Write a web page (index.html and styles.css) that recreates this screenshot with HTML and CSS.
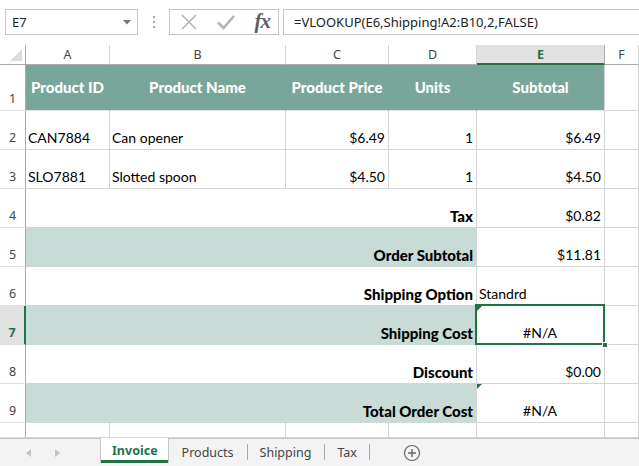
FILE: index.html
```html
<!DOCTYPE html>
<html lang="en">
<head>
  <meta charset="UTF-8" />
  <title>Invoice - Excel</title>
  <link rel="stylesheet" href="styles.css">
</head>
<body>

<div class="app">
  <div class="formula-bar">
    <div class="name-box">
      <span>E7</span>
      <svg class="caret" width="8" height="5" viewBox="0 0 8 5"><path d="M0 0 H8 L4 4.5 Z" fill="#777"/></svg>
    </div>
    <div class="grip"><i></i><i></i><i></i></div>
    <div class="fx-buttons">
      <svg width="18" height="18" viewBox="0 0 18 18"><path d="M2 2 L16 16 M16 2 L2 16" stroke="#b4b4b4" stroke-width="1.6" fill="none"/></svg>
      <svg width="20" height="18" viewBox="0 0 20 18"><path d="M2 9.5 L7.5 15 L18 3" stroke="#b4b4b4" stroke-width="2.6" fill="none"/></svg>
      <span class="fx">fx</span>
    </div>
    <div class="formula">=VLOOKUP(E6,Shipping!A2:B10,2,FALSE)</div>
  </div>

  <div class="sheet">
    <div class="corner"><span></span></div>
    <div class="col-head">A</div>
    <div class="col-head">B</div>
    <div class="col-head">C</div>
    <div class="col-head">D</div>
    <div class="col-head active">E</div>
    <div class="col-head">F</div>

    <div class="row-head">1</div>
    <div class="cell head">Product ID</div>
    <div class="cell head">Product Name</div>
    <div class="cell head">Product Price</div>
    <div class="cell head">Units</div>
    <div class="cell head">Subtotal</div>
    <div class="cell"></div>

    <div class="row-head">2</div>
    <div class="cell">CAN7884</div>
    <div class="cell">Can opener</div>
    <div class="cell num">$6.49</div>
    <div class="cell num">1</div>
    <div class="cell num">$6.49</div>
    <div class="cell"></div>

    <div class="row-head">3</div>
    <div class="cell">SLO7881</div>
    <div class="cell">Slotted spoon</div>
    <div class="cell num">$4.50</div>
    <div class="cell num">1</div>
    <div class="cell num">$4.50</div>
    <div class="cell"></div>

    <div class="row-head">4</div>
    <div class="cell label">Tax</div>
    <div class="cell num">$0.82</div>
    <div class="cell"></div>

    <div class="row-head">5</div>
    <div class="cell label band">Order Subtotal</div>
    <div class="cell num">$11.81</div>
    <div class="cell"></div>

    <div class="row-head">6</div>
    <div class="cell label">Shipping Option</div>
    <div class="cell">Standrd</div>
    <div class="cell"></div>

    <div class="row-head active">7</div>
    <div class="cell label band">Shipping Cost</div>
    <div class="cell center selected"><span class="err"></span>#N/A<span class="handle"></span></div>
    <div class="cell"></div>

    <div class="row-head">8</div>
    <div class="cell label">Discount</div>
    <div class="cell num">$0.00</div>
    <div class="cell"></div>

    <div class="row-head">9</div>
    <div class="cell label band">Total Order Cost</div>
    <div class="cell center"><span class="err"></span>#N/A</div>
    <div class="cell"></div>

    <div class="row-head"></div>
    <div class="cell"></div>
    <div class="cell"></div>
    <div class="cell"></div>
    <div class="cell"></div>
    <div class="cell"></div>
    <div class="cell"></div>
  </div>

  <div class="tabs">
    <div class="nav">
      <svg width="6" height="8" viewBox="0 0 6 8"><path d="M5 0 V8 L0 4 Z" fill="#c4c4c4"/></svg>
      <svg width="6" height="8" viewBox="0 0 6 8"><path d="M1 0 V8 L6 4 Z" fill="#c4c4c4"/></svg>
    </div>
    <div class="tab current">Invoice</div>
    <div class="tab">Products</div>
    <div class="tab">Shipping</div>
    <div class="tab">Tax</div>
    <svg class="add" width="18" height="18" viewBox="0 0 18 18">
      <circle cx="9" cy="9" r="7.5" stroke="#666" stroke-width="1.2" fill="none"/>
      <path d="M9 5 V13 M5 9 H13" stroke="#666" stroke-width="1.4"/>
    </svg>
  </div>
</div>

</body>
</html>
```

FILE: styles.css
```css
* {
  box-sizing: border-box;
}
body {
  margin: 0;
  background: #fff;
  font-family: "Noto Sans", "Open Sans", sans-serif;
}

.app {
  width: 639px;
  height: 466px;
  overflow: hidden;
}

/* formula bar */
.formula-bar {
  height: 45px;
  display: flex;
  align-items: flex-start;
  padding: 9px 0 0 5px;
}

.name-box {
  width: 133px;
  height: 26px;
  border: 1px solid #c6c6c6;
  display: flex;
  align-items: center;
  justify-content: space-between;
  padding: 0 6px 0 6px;
  font-size: 13px;
  color: #222;
}

.grip {
  width: 31px;
  height: 26px;
  display: flex;
  flex-direction: column;
  align-items: center;
  justify-content: center;
  gap: 3px;
}
.grip i {
  width: 2px;
  height: 2px;
  background: #a6a6a6;
}

.fx-buttons {
  width: 110px;
  height: 26px;
  border: 1px solid #c6c6c6;
  display: flex;
  align-items: center;
  justify-content: space-between;
  padding: 0 8px 0 10px;
}
.fx {
  font-family: "Liberation Serif", "DejaVu Serif", serif;
  font-style: italic;
  font-weight: bold;
  font-size: 21px;
  color: #606060;
  letter-spacing: -1px;
  line-height: 1;
  margin-top: -2px;
}

.formula {
  flex: 1;
  height: 26px;
  margin-left: 4px;
  border: 1px solid #c6c6c6;
  border-right: 0;
  padding-left: 10px;
  font-size: 13px;
  line-height: 24px;
  color: #222;
  white-space: nowrap;
}

/* grid */
.sheet {
  display: grid;
  grid-template-columns: 26px 84px 176px 103px 88px 128px 1fr;
  grid-template-rows: 20px 46px repeat(8, 39px) 15px;
  height: 393px;
  overflow: hidden;
  font-family: Lato, "Carlito", sans-serif;
  font-size: 14px;
  color: #000;
}

.corner {
  border-right: 1px solid #ababab;
  border-bottom: 1px solid #ababab;
  position: relative;
}
.corner span {
  position: absolute;
  right: 3px;
  bottom: 3px;
  width: 0;
  height: 0;
  border-left: 12px solid transparent;
  border-bottom: 12px solid #dcdcdc;
}

.col-head {
  border-right: 1px solid #d4d4d4;
  border-bottom: 1px solid #ababab;
  font-family: "Noto Sans", sans-serif;
  font-size: 12.5px;
  color: #444;
  text-align: center;
  line-height: 19px;
}
.col-head.active {
  background: #e1e1e1;
  color: #217346;
  font-weight: bold;
  border-bottom: 2px solid #217346;
  border-right-color: #ababab;
}

.row-head {
  border-right: 1px solid #ababab;
  border-bottom: 1px solid #dedede;
  font-family: "Noto Sans", sans-serif;
  font-size: 12.5px;
  color: #444;
  display: flex;
  align-items: flex-end;
  justify-content: center;
  padding-bottom: 3px;
}
.row-head.active {
  background: #e1e1e1;
  color: #217346;
  font-weight: bold;
  border-right: 2px solid #217346;
}

.cell {
  border-right: 1px solid #d4d4d4;
  border-bottom: 1px solid #d4d4d4;
  display: flex;
  align-items: flex-end;
  padding: 0 3px 3px 2px;
  white-space: nowrap;
  position: relative;
}
.cell.head {
  background: #79a69a;
  border-right-color: #79a69a;
  border-bottom-color: #dfe8e5;
  color: #fff;
  font-weight: 900;
  font-size: 15px;
  align-items: center;
  justify-content: center;
  padding: 0 0 1px;
}
.cell.head:nth-child(13) {
  border-right-color: #d4d4d4;
}
.cell.num {
  justify-content: flex-end;
}
.cell.center {
  justify-content: center;
}
.cell.label {
  grid-column: span 4;
  justify-content: flex-end;
  font-weight: 900;
  font-size: 15px;
  padding-right: 3px;
  padding-bottom: 2px;
}
.cell.band {
  background: #c9dbd6;
  border-right-color: #d4d4d4;
  border-bottom-color: #c9dbd6;
}

.err {
  position: absolute;
  top: 0;
  left: 0;
  width: 0;
  height: 0;
  border-top: 5px solid #217346;
  border-right: 5px solid transparent;
}

.selected::after {
  content: "";
  position: absolute;
  top: -2px;
  left: -2px;
  right: -1px;
  bottom: -1px;
  border: 2px solid #217346;
}
.handle {
  position: absolute;
  right: -4px;
  bottom: -4px;
  width: 6px;
  height: 6px;
  background: #217346;
  border: 1px solid #fff;
  z-index: 2;
}

/* sheet tabs */
.tabs {
  height: 28px;
  background: #f3f3f3;
  border-top: 1px solid #c6c6c6;
  display: flex;
  align-items: stretch;
  font-size: 12.5px;
  color: #444;
}

.nav {
  width: 100px;
  display: flex;
  align-items: center;
  gap: 22px;
  padding-left: 26px;
}

.tab {
  display: flex;
  align-items: center;
  padding: 0 13px;
  position: relative;
}
.tab + .tab::before {
  content: "";
  position: absolute;
  left: 0;
  top: 5px;
  bottom: 6px;
  border-left: 1px solid #aaa;
}
.tab:last-of-type::after {
  content: "";
  position: absolute;
  right: 0;
  top: 5px;
  bottom: 6px;
  border-left: 1px solid #aaa;
}
.tab.current {
  background: #fff;
  border-left: 1px solid #c6c6c6;
  border-right: 1px solid #c6c6c6;
  margin-top: -1px;
  padding: 0 10px 0 11px;
  color: #217346;
  font-weight: bold;
  box-shadow: inset 0 -3px 0 #217346;
  height: 25px;
}
.tab.current + .tab::before {
  display: none;
}

.add {
  margin: 5px 0 0 33px;
}
```
